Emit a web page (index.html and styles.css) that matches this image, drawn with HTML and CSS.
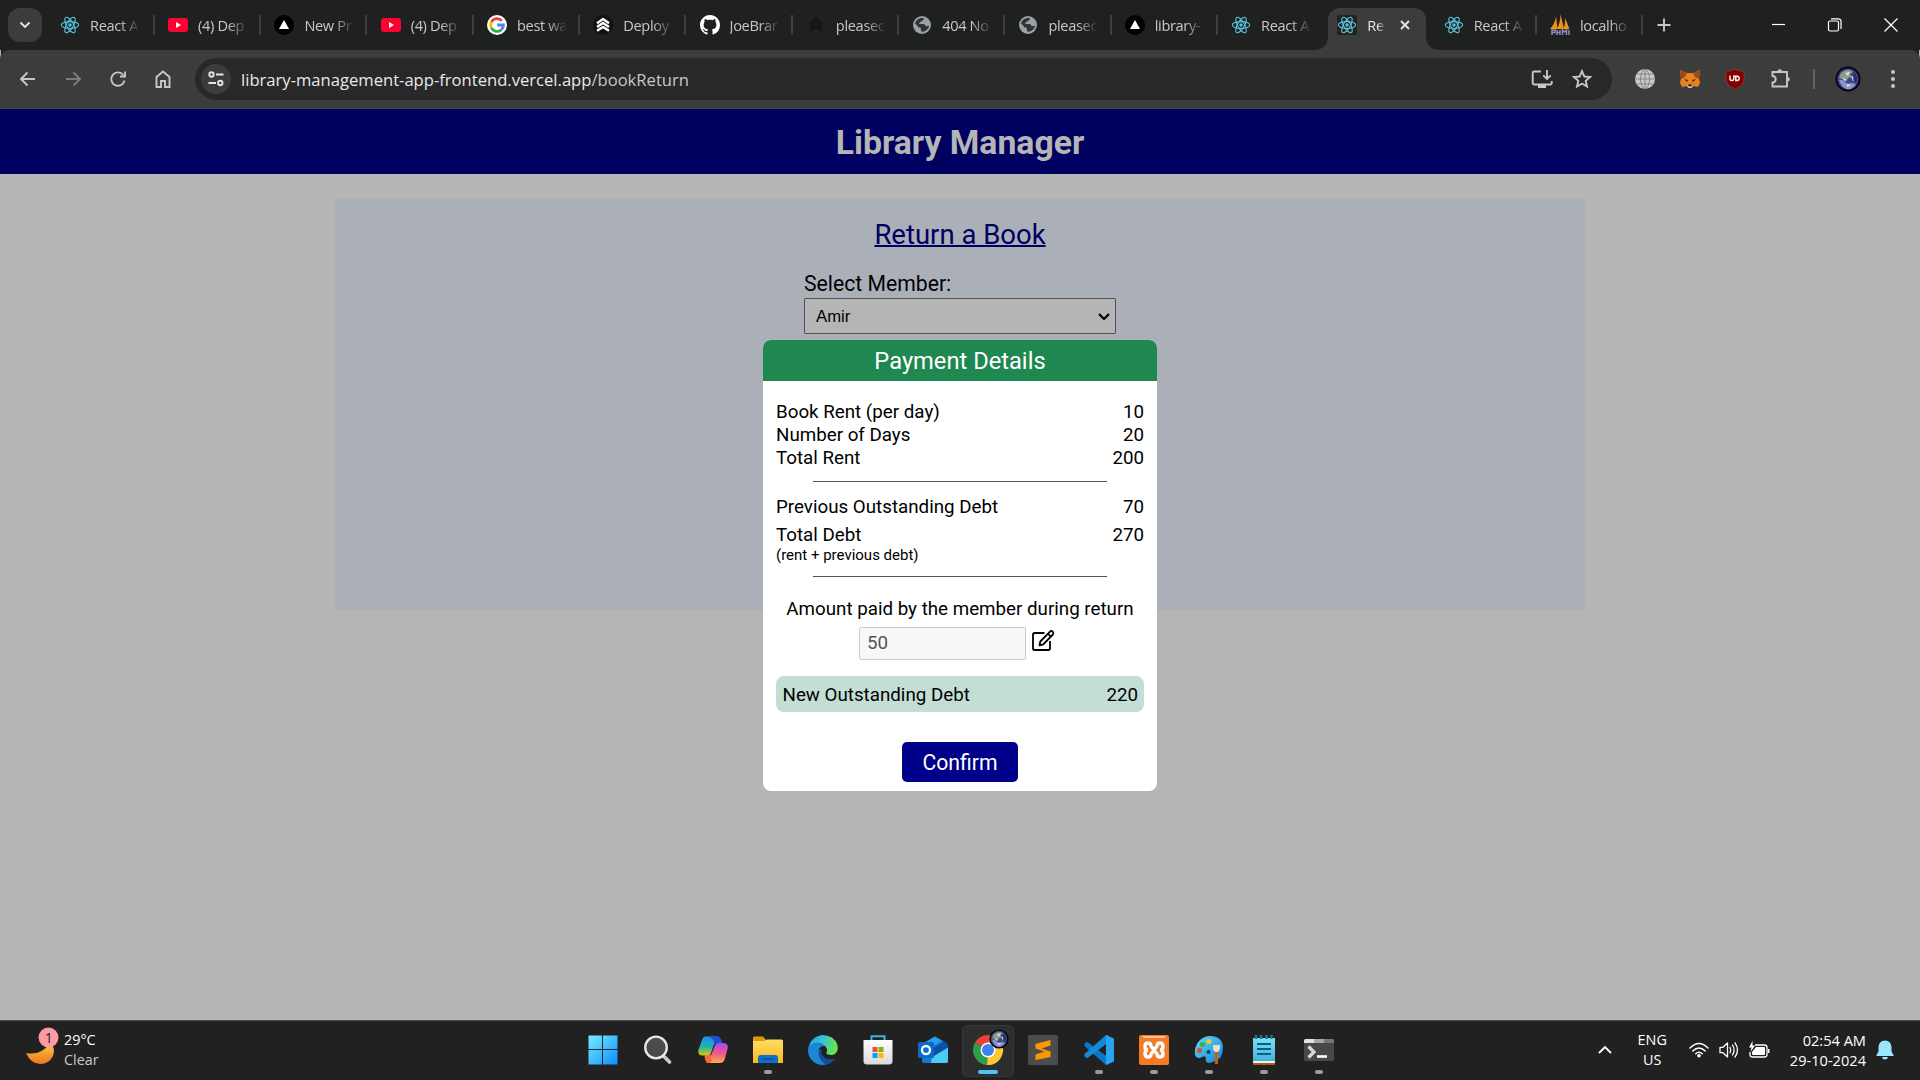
FILE: index.html
```html
<!DOCTYPE html>
<html lang="en">
<head>
<meta charset="utf-8">
<title>Library Manager</title>
<link rel="stylesheet" href="styles.css">
</head>
<body>
<svg class="defs" width="0" height="0" aria-hidden="true">
  <defs>
    <symbol id="react" viewBox="0 0 20 20">
      <g fill="none" stroke="#58c4dc" stroke-width="1.1">
        <ellipse cx="10" cy="10" rx="8.7" ry="3.4"/>
        <ellipse cx="10" cy="10" rx="8.7" ry="3.4" transform="rotate(60 10 10)"/>
        <ellipse cx="10" cy="10" rx="8.7" ry="3.4" transform="rotate(120 10 10)"/>
      </g>
      <circle cx="10" cy="10" r="1.7" fill="#58c4dc"/>
    </symbol>
    <symbol id="youtube" viewBox="0 0 20 20">
      <rect y="3" width="20" height="14" rx="3" fill="#ff0033"/>
      <path d="M8 7v6l5-3z" fill="#fff"/>
    </symbol>
    <symbol id="vercel" viewBox="0 0 20 20">
      <circle cx="10" cy="10" r="10" fill="#000"/>
      <path d="M10 5l5 9H5z" fill="#fff"/>
    </symbol>
    <symbol id="google" viewBox="0 0 20 20">
      <circle cx="10" cy="10" r="10" fill="#fff"/>
      <g fill="none" stroke-width="2.8">
        <path d="M14.8 5.8A6.4 6.4 0 0 0 4.4 7" stroke="#ea4335"/>
        <path d="M4.4 7a6.4 6.4 0 0 0 0 6" stroke="#fbbc05"/>
        <path d="M4.4 13a6.4 6.4 0 0 0 9.8 1.9" stroke="#34a853"/>
        <path d="M14.2 14.9A6.3 6.3 0 0 0 16.4 10H10.2" stroke="#4285f4"/>
      </g>
    </symbol>
    <symbol id="layers" viewBox="0 0 20 20">
      <g fill="none" stroke="currentColor" stroke-width="2.4" stroke-linejoin="round">
        <path d="M4 8.2L10 4l6 4.2"/><path d="M4 12L10 8l6 4"/><path d="M4 15.8L10 12l6 3.8"/>
      </g>
    </symbol>
    <symbol id="github" viewBox="0 0 16 16">
      <path fill="#fff" d="M8 0C3.58 0 0 3.58 0 8c0 3.54 2.29 6.53 5.47 7.59.4.07.55-.17.55-.38 0-.19-.01-.82-.01-1.49-2.01.37-2.53-.49-2.69-.94-.09-.23-.48-.94-.82-1.13-.28-.15-.68-.52-.01-.53.63-.01 1.08.58 1.23.82.72 1.21 1.87.87 2.33.66.07-.52.28-.87.51-1.07-1.78-.2-3.64-.89-3.64-3.95 0-.87.31-1.59.82-2.15-.08-.2-.36-1.02.08-2.12 0 0 .67-.21 2.2.82.64-.18 1.32-.27 2-.27s1.36.09 2 .27c1.53-1.04 2.2-.82 2.2-.82.44 1.1.16 1.92.08 2.12.51.56.82 1.27.82 2.15 0 3.07-1.87 3.75-3.65 3.95.29.25.54.73.54 1.48 0 1.07-.01 1.93-.01 2.2 0 .21.15.46.55.38A8.01 8.01 0 0 0 16 8c0-4.42-3.58-8-8-8z"/>
    </symbol>
    <symbol id="globe" viewBox="0 0 20 20">
      <circle cx="10" cy="10" r="9" fill="#9aa0a6"/>
      <path d="M3 8.5C4 5 7 3 11 2.800c1.500.8.8 2.500-.8 2.900-1.700.3-1.200 1.800-2.700 2-1 .2-.3 1.300.8 1.300h3.200c1.500.2 1.500 1.800 2.700 2.100 1 .3 2.200-.3 3-.6-.6 3.500-3.500 6-6.700 6.300-1-.3-1.800-1-1.600-2.100.2-1.300-.1-2-1.500-2.100-1.500-.1-1.500-1.600-2.500-2.400z" fill="#1f2020" opacity=".85"/>
    </symbol>
    <symbol id="earth" viewBox="0 0 26 26">
      <circle cx="13" cy="13" r="12.500" fill="#05060c"/>
      <circle cx="13" cy="13" r="10.600" fill="#3c4a8c"/>
      <path d="M6 7q5-4 9-3l3 2-3 2 2 3-4 1-2 4-3-3-4-1z" fill="#8b9b86"/>
      <path d="M4 14q4-1 6 2t6 1l5 1q-3 5-8 5.500-6-1-9-9.500z" fill="#8b96c8"/>
      <path d="M10 7l5-1-2 4zM16 10l5 2-3 3zM7 12l4 1-1 2zM12 18l4 1-4 2z" fill="#dfe3ea"/>
      <path d="M18 5q6 5 3 12l-3-4 1-3z" fill="#252f68"/>
    </symbol>
    <linearGradient id="gWin" x1="0" y1="0" x2="1" y2="1"><stop stop-color="#79eeff"/><stop offset="1" stop-color="#0a8dfc"/></linearGradient>
    <linearGradient id="gMoon" x1="0" y1="0" x2="0" y2="1"><stop stop-color="#f9c846"/><stop offset="1" stop-color="#f0761a"/></linearGradient>
    <linearGradient id="gCopA" x1="0" y1="0" x2="0" y2="1"><stop stop-color="#1e8ff0"/><stop offset=".5" stop-color="#1eb0b8"/><stop offset=".75" stop-color="#7cc04a"/><stop offset="1" stop-color="#f3c81b"/></linearGradient>
    <linearGradient id="gCopB" x1="0" y1="0" x2="0" y2="1"><stop stop-color="#a24df0"/><stop offset=".5" stop-color="#f0548c"/><stop offset="1" stop-color="#ffac4a"/></linearGradient>
    <linearGradient id="gFold" x1="0" y1="0" x2="0" y2="1"><stop stop-color="#ffdd63"/><stop offset="1" stop-color="#f9b91c"/></linearGradient>
    <linearGradient id="gEdge" x1="0" y1="0" x2="1" y2=".3"><stop stop-color="#1f9be8"/><stop offset=".5" stop-color="#35c3d8"/><stop offset="1" stop-color="#66e34f"/></linearGradient>
    <linearGradient id="gStore" x1="0" y1="0" x2="0" y2="1"><stop stop-color="#fff"/><stop offset="1" stop-color="#d9d9d9"/></linearGradient>
    <linearGradient id="gPal" x1="0" y1="0" x2="1" y2="1"><stop stop-color="#5be0fa"/><stop offset="1" stop-color="#1380d8"/></linearGradient>
    <linearGradient id="gNote" x1="0" y1="0" x2="0" y2="1"><stop stop-color="#7fe0f2"/><stop offset="1" stop-color="#40b4d6"/></linearGradient>
  </defs>
</svg>

<header class="tabstrip">
  <button class="tab-search"><svg width="12" height="8" viewBox="0 0 12 8"><path d="M1.500 1.500L6 6l4.500-4.500" class="ln"/></svg></button>
  <nav class="tabs">
    <div class="tab"><svg class="fav"><use href="#react"/></svg><span>React A</span></div>
    <div class="tab"><svg class="fav"><use href="#youtube"/></svg><span>(4) Dep</span></div>
    <div class="tab"><svg class="fav"><use href="#vercel"/></svg><span>New Pr</span></div>
    <div class="tab"><svg class="fav"><use href="#youtube"/></svg><span>(4) Dep</span></div>
    <div class="tab"><svg class="fav"><use href="#google"/></svg><span>best wa</span></div>
    <div class="tab"><svg class="fav fav-dark"><use href="#layers"/></svg><span>Deploy</span></div>
    <div class="tab"><svg class="fav"><use href="#github"/></svg><span>JoeBrar</span></div>
    <div class="tab"><svg class="fav fav-dim"><use href="#layers"/></svg><span>pleasec</span></div>
    <div class="tab"><svg class="fav"><use href="#globe"/></svg><span>404 No</span></div>
    <div class="tab"><svg class="fav"><use href="#globe"/></svg><span>pleasec</span></div>
    <div class="tab"><svg class="fav"><use href="#vercel"/></svg><span>library-</span></div>
    <div class="tab no-sep"><svg class="fav"><use href="#react"/></svg><span>React A</span></div>
    <div class="tab active"><svg class="fav fav-box"><use href="#react"/></svg><span>Re</span><svg class="close" width="10" height="10" viewBox="0 0 10 10"><path d="M1 1l8 8M9 1L1 9" class="ln"/></svg></div>
    <div class="tab"><svg class="fav"><use href="#react"/></svg><span>React A</span></div>
    <div class="tab"><svg class="fav" viewBox="0 0 20 20"><path d="M0 14Q5 9 6 1l1.500 13zM7 14Q10.500 7 10.500-1L14 14zM13.500 14q2-5 1.500-11l4.500 11z" fill="#f29111"/><path d="M2 20v-5h3v2.500H2M7 20v-5M10 20v-5M7 17.500h3M12.500 20v-5l2 2 2-2v5M19 20v-5" fill="none" stroke="#8a8cc0" stroke-width="1.500"/></svg><span>localho</span></div>
  </nav>
  <button class="new-tab"><svg width="14" height="14" viewBox="0 0 14 14"><path d="M7 .5v13M.5 7h13" class="ln"/></svg></button>
  <div class="window-controls">
    <svg width="14" height="14" viewBox="0 0 14 14"><path d="M0 6.500h13" class="thin"/></svg>
    <svg width="14" height="14" viewBox="0 0 14 14"><rect x=".5" y="3" width="10" height="10" rx="1.500" class="thin"/><path d="M3 .800h7.500a2.500 2.500 0 0 1 2.500 2.500V11" class="thin"/></svg>
    <svg width="14" height="14" viewBox="0 0 14 14"><path d="M.5.5l13 13M13.500.5l-13 13" class="thin"/></svg>
  </div>
</header>

<section class="toolbar">
  <div class="nav-buttons">
    <svg width="20" height="20" viewBox="0 0 20 20"><path d="M17 10H3.500M9.500 3.500L3 10l6.500 6.500" class="ln"/></svg>
    <svg class="off" width="20" height="20" viewBox="0 0 20 20"><path d="M3 10h13.500M10.500 3.500L17 10l-6.500 6.500" class="ln"/></svg>
    <svg width="20" height="20" viewBox="0 0 20 20"><path d="M16.500 11.500A6.700 6.700 0 1 1 15.300 6M17 2.500V7.500h-5" class="ln"/></svg>
    <svg width="20" height="20" viewBox="0 0 20 20"><path d="M3.500 8L10 2.500 16.500 8v10H12v-6H8v6H3.500z" class="ln"/></svg>
  </div>
  <div class="omnibox">
    <span class="site-chip"><svg width="18" height="18" viewBox="0 0 18 18"><g class="ln"><circle cx="4.500" cy="4.500" r="2.200"/><path d="M9 4.500h7.500M1.500 13H9"/><circle cx="13.300" cy="13" r="2.200"/></g></svg></span>
    <span class="url">library-management-app-frontend.vercel.app<em>/bookReturn</em></span>
    <svg class="install" width="22" height="20" viewBox="0 0 22 20"><path d="M10 2.500H3.200a1.500 1.500 0 0 0-1.500 1.500V14a1.500 1.500 0 0 0 1.500 1.500h16A1.500 1.500 0 0 0 20.700 14v-2M16 1v8.500M12.300 6.300L16 10l3.700-3.700" class="ln"/><path d="M7 16h8v3H7z" fill="#c7c7c7"/></svg>
    <svg width="20" height="20" viewBox="0 0 20 20"><path d="M10 2.200l2.300 5.300 5.800.5-4.400 3.800 1.300 5.700-5-3-5 3 1.300-5.700L1.900 8l5.800-.5z" class="ln"/></svg>
  </div>
  <div class="extensions">
    <svg width="20" height="20" viewBox="0 0 20 20"><circle cx="10" cy="10" r="10" fill="#c9c9c9"/><g fill="none" stroke="#858585"><ellipse cx="10" cy="10" rx="4.500" ry="9.500"/><path d="M10 0v20M.5 10h19M2 5h16M2 15h16"/></g></svg>
    <svg width="20" height="20" viewBox="0 0 20 20"><path d="M0 1l7 3h6l7-3-1 8 1 5-2 4-5-1-1.500 2h-3L7 17l-5 1-2-4 1-5z" fill="#e8821e"/><path d="M0 1l7 3-2 4-4 2zM20 1l-7 3 2 4 4 2z" fill="#9c4a1c"/><path d="M4 10l4 1-1 2zM16 10l-4 1 1 2z" fill="#3b2b25"/><path d="M7 17l1.500-1.500h3L13 17l-1.500 2h-3z" fill="#d5c8bc"/><path d="M8.300 15.300h3.400v2H8.300z" fill="#222"/></svg>
    <svg width="20" height="20" viewBox="0 0 20 20"><path d="M10 0q4 2.500 9 2.500V10q0 6.500-9 10-9-3.500-9-10V2.500Q6 2.500 10 0z" fill="#800000" stroke="#a54a4a" stroke-width=".5"/><path d="M5 6.500v3.300q0 1.700 1.900 1.700t1.900-1.700V6.500M8.800 7.200h3.700a2.200 2.200 0 0 1 0 4.300h-1.700V7.200" fill="none" stroke="#fff" stroke-width="1.400"/></svg>
    <svg width="22" height="22" viewBox="0 0 22 22"><path d="M2.500 4h14.500v14.500H2.500v-4q3.200 0 3.200-3.200T2.500 8z" class="ln"/><path d="M7.500 3.500a2.300 2.300 0 0 1 4.600 0zM17.500 9a2.300 2.300 0 0 1 0 4.600z" fill="#c7c7c7"/></svg>
    <i class="divider"></i>
    <svg class="avatar" width="26" height="26"><use href="#earth"/></svg>
    <svg width="20" height="20" viewBox="0 0 20 20" fill="#c7c7c7"><circle cx="10" cy="3" r="2"/><circle cx="10" cy="10" r="2"/><circle cx="10" cy="17" r="2"/></svg>
  </div>
</section>

<main class="page">
  <header class="brand">Library Manager</header>
  <section class="panel">
    <h2>Return a Book</h2>
    <div class="member">
      <label for="member">Select Member:</label>
      <select id="member"><option>Amir</option></select>
      <svg class="caret" width="12" height="8" viewBox="0 0 12 8"><path d="M1 1l5 5 5-5" fill="none" stroke="#000" stroke-width="2.200"/></svg>
    </div>
  </section>

  <div class="modal">
    <header class="modal-title">Payment Details</header>
    <div class="modal-body">
      <div class="row"><span>Book Rent (per day)</span><span>10</span></div>
      <div class="row"><span>Number of Days</span><span>20</span></div>
      <div class="row"><span>Total Rent</span><span>200</span></div>
      <hr>
      <div class="row"><span>Previous Outstanding Debt</span><span>70</span></div>
      <div class="row total"><span>Total Debt</span><span>270</span></div>
      <div class="note">(rent + previous debt)</div>
      <hr>
      <div class="paid-label">Amount paid by the member during return</div>
      <div class="paid">
        <input value="50" disabled>
        <svg width="24" height="23" viewBox="0 0 24 23"><g fill="none" stroke="#000" stroke-width="1.800" stroke-linejoin="round"><path d="M13.500 4H3.700A1.700 1.700 0 0 0 2 5.700v13.600A1.700 1.700 0 0 0 3.700 21h13.600a1.700 1.700 0 0 0 1.700-1.700V12"/><path d="M8.500 16.300l.8-3.800L19 2.600q1.400-1.200 2.700 0t.2 2.900L12.300 15.400z"/><path d="M17 4.800l2.800 2.900"/></g></svg>
      </div>
      <div class="row new-debt"><span>New Outstanding Debt</span><span>220</span></div>
      <button class="confirm">Confirm</button>
    </div>
  </div>
</main>

<footer class="taskbar">
  <div class="weather">
    <svg width="34" height="38" viewBox="0 0 34 38"><path d="M0 26q15 3 24-10 6 5 3 13-4 8-13 8-9 0-14-11z" fill="url(#gMoon)"/><circle cx="22.500" cy="10.500" r="10" fill="#ff99a4"/><text x="22.800" y="15.800" text-anchor="middle" class="badge">1</text></svg>
    <div><b>29°C</b><span>Clear</span></div>
  </div>
  <div class="apps">
    <div class="app"><svg viewBox="0 0 30 30"><path d="M.5.5H14V14H.5zM15 .5h14.500V14H15zM.5 15H14v14.500H.5zM15 15h14.500v14.500H15z" fill="url(#gWin)"/></svg></div>
    <div class="app"><svg viewBox="0 0 30 30"><path d="M19 19.500l7.500 7.500" stroke="#c9cbd0" stroke-width="3.600" stroke-linecap="round"/><circle cx="13" cy="12.500" r="10.800" fill="#4b4b4b" stroke="#e8e9ec" stroke-width="2.300"/></svg></div>
    <div class="app"><svg viewBox="0 0 30 30"><path d="M7 1.500h12q3 0 4 3.500l1 3h-5q-3 0-4 4l-2 6-2 3q-1 0-3-.500H5q-6 0-4.500-6L4 5q1-3.500 3-3.500z" fill="url(#gCopA)"/><path d="M15 1.500h4q3 0 4 3.500l1 3h-5l-2.500 2q0-6-5.500-8.500z" fill="#1b50d8"/><path d="M24.500 8h1.500q5 1 3.500 6L27 23.500q-1.500 4.500-5 4.500H10q-2 0-3-5l-.5-2.500h5q2 0 3-4l2-5q1.500-3.500 4-3.500z" fill="url(#gCopB)"/><path d="M6.500 20.500h5L14 26l-2 2h-2q-2 0-3-5z" fill="#f56a38"/></svg></div>
    <div class="app"><svg viewBox="0 0 30 30"><path d="M0 3q0-1.500 1.500-1.500H10L13 5v5H0z" fill="#dc9a08"/><path d="M0 6h11l3-1.500h14.500Q30 4.500 30 6v22H0z" fill="url(#gFold)"/><path d="M5 28v-5q0-3 3-3h14q3 0 3 3v5z" fill="#0f6fc4"/><path d="M8.500 24h13" stroke="#0a4b92" stroke-width="1.300"/></svg><i></i></div>
    <div class="app"><svg viewBox="0 0 30 30"><path d="M0 15A15 15 0 0 0 24 27q-6 1-9-3-4-5-1-9z" fill="#1766b8"/><path d="M10.500 16.500q-1 12 9 12.800 5-1.300 8-6.300-5 2.500-10 0t-4-8z" fill="#104f96"/><path d="M0 15Q2 2 14 0q12 0 15.500 10 1.500 8-5 10-5 .5-6.500-2 2.500-3-.5-6.500Q12 5.500 4.500 9.500 1 12 0 15z" fill="url(#gEdge)"/><path d="M0 15q1-7 9-7.500 6 0 8.500 4-5-2-7 4-1 8 6.500 13.700-5 1.500-10-1.500Q0 23 0 15z" fill="#1b86d3"/></svg></div>
    <div class="app"><svg viewBox="0 0 30 30"><path d="M8.500 6V1.300h13V6" fill="none" stroke="#35b8f0" stroke-width="2"/><path d="M.5 5h29v21q0 3.500-3.500 3.500H4Q.5 29.500.5 26z" fill="url(#gStore)"/><path d="M9.500 12h5v5h-5z" fill="#f25022"/><path d="M15.500 12h5v5h-5z" fill="#7fba00"/><path d="M9.500 18h5v5h-5z" fill="#00a4ef"/><path d="M15.500 18h5v5h-5z" fill="#ffb900"/></svg></div>
    <div class="app"><svg viewBox="0 0 30 30"><path d="M4 9L17 1.500 30 9v17q0 2-2 2H6q-2 0-2-2z" fill="#1679cf"/><path d="M4 9L17 1.500 24 5.500 8 16z" fill="#2a9be8"/><path d="M15 17L30 9v17q0 2-2 2H13z" fill="#48cdf5"/><path d="M30 9v3.500L16 21l-4-6 14-8.500z" fill="#0a4fa8"/><rect y="7" width="16" height="16" rx="1.500" fill="#0b6bcb"/><circle cx="8" cy="15" r="4" fill="none" stroke="#fff" stroke-width="2.300"/></svg></div>
    <div class="app current"><svg viewBox="0 0 30 30"><path d="M15 15L2 7.500A15 15 0 0 1 28 7.500z" fill="#ea4335"/><path d="M15 15l-1 15A15 15 0 0 1 2 7.500z" fill="#2f9e4b"/><path d="M15 15l0-7.500h13A15 15 0 0 1 14 30z" fill="#fcc934"/><circle cx="15" cy="15" r="7.500" fill="#fff"/><circle cx="15" cy="15" r="6" fill="#3d82f0"/></svg><svg class="profile" viewBox="0 0 26 26"><use href="#earth" width="26" height="26"/></svg><i></i></div>
    <div class="app"><svg viewBox="0 0 30 30"><rect width="30" height="30" rx="1.500" fill="#4c4c4c"/><path d="M22.500 5v5.500l-9 3 9 3v5.500L7.500 25v-5.500l9-3-9-3V9z" fill="#ff9800"/></svg></div>
    <div class="app"><svg viewBox="0 0 30 30"><path d="M1.500 7.500L3.500 7 25 23v6l-3 1L.5 11V9z" fill="#0a78c8"/><path d="M1.500 22.500l2 .5L25 7V1l-3-1L.5 19v2z" fill="#1389d8"/><path d="M22 0l8 3.500v23L22 30z" fill="#29a4ee"/></svg><i></i></div>
    <div class="app"><svg viewBox="0 0 30 30"><rect width="30" height="30" rx="2" fill="#f47b25"/><path d="M3 1h24l-2 2H5z" fill="#ffc193"/><path d="M12 11q0-3-3-3t-3 3.500T9 15q-3 0-3 3.500T9 22t3-3l1.500-2q1.500-1.500 3 0L18 19q0 3 3 3t3-3.500-3-3.500q3 0 3-3.500T21 8t-3 3l-1.500 2q-1.500 1.500-3 0z" fill="none" stroke="#fff" stroke-width="3.400"/></svg><i></i></div>
    <div class="app"><svg viewBox="0 0 30 30"><path d="M16 1Q28 1 29 12q0 12-8 14-4 2-7 2-3-1-2-5-1-3-4-1-5 3-7-2Q0 12 5 6q5-5 11-5z" fill="url(#gPal)"/><circle cx="15" cy="6.500" r="2.600" fill="#f7c325"/><circle cx="8.500" cy="9.500" r="2.600" fill="#3fae3a"/><circle cx="5.500" cy="15.500" r="2.600" fill="#d9532b"/><circle cx="14.500" cy="17" r="2" fill="#123d6a"/><path d="M20.500 15h3.500v14h-3z" fill="#b8651b"/><path d="M19 10h7v4l-2 3h-3l-2-3z" fill="#eadfcb"/></svg><i></i></div>
    <div class="app"><svg viewBox="0 0 30 30"><path d="M4 27h22v3H4z" fill="#b5561b"/><path d="M4 25.500h22v2.500H4z" fill="#f3eee6"/><path d="M4 3h22v23H4z" fill="url(#gNote)"/><path d="M8 9h14M8 14h14M8 19h14" stroke="#0b5d86" stroke-width="1.800"/><path d="M7 0v4M12 0v4M17.500 0v4M22.500 0v4" stroke="#14799c" stroke-width="2.400"/></svg><i></i></div>
    <div class="app"><svg viewBox="0 0 30 30"><rect y="4" width="30" height="22" rx="1.500" fill="#484848"/><path d="M0 8V5.500Q0 4 1.500 4H10v4z" fill="#e2e2e2"/><path d="M10 4h10v4H10z" fill="#a8a8a8"/><path d="M20 4h8.500Q30 4 30 5.500V8H20z" fill="#777"/><path d="M4.500 11.500l5.500 5.500-5.500 5.500" fill="none" stroke="#d8d8d8" stroke-width="3.200"/><path d="M13 21.500h10" stroke="#fff" stroke-width="2.600"/></svg><i></i></div>
  </div>
  <div class="tray">
    <svg class="chev" width="14" height="9" viewBox="0 0 14 9"><path d="M1 8l6-6 6 6" fill="none" stroke="#fff" stroke-width="1.800"/></svg>
    <div class="lang">ENG<br>US</div>
    <svg class="wifi" width="20" height="16" viewBox="0 0 20 16"><g fill="none" stroke="#fff" stroke-width="1.500" stroke-linecap="round"><path d="M1 6q9-9 18 0M3.800 9q6.200-6 12.400 0M6.700 11.700q3.300-3 6.600 0"/></g><circle cx="10" cy="13.800" r="1.800" fill="#fff"/></svg>
    <svg class="vol" width="20" height="18" viewBox="0 0 20 18"><g fill="none" stroke="#fff" stroke-width="1.300" stroke-linecap="round"><path d="M1 6.300h3L8.500 2v14L4 11.700H1z" stroke-linejoin="round"/><path d="M11 6.300q1.500 2.700 0 5.400M13.500 4q3.200 5 0 10M16 1.800q5 7.200 0 14.400"/></g></svg>
    <svg class="bat" width="22" height="18" viewBox="0 0 22 18"><path d="M7 4h9.500A2.500 2.500 0 0 1 19 6.500v7a2.500 2.500 0 0 1-2.500 2.500h-12A2.500 2.500 0 0 1 2 13.500V11" fill="none" stroke="#fff" stroke-width="1.300"/><path d="M8 6h8q1 0 1 1v6q0 1-1 1H5q-1 0-1-1v-2zM20 8h1.500v4H20z" fill="#fff"/><path d="M4.500 0L1 6.500h2.500L2.500 11 7 4.500H4.500z" fill="#fff"/></svg>
    <div class="clock">02:54 AM<br>29-10-2024</div>
    <svg width="18" height="20" viewBox="0 0 18 20"><path d="M9 .5q6 0 6.500 6.500v4.500L17.500 15v1H.5v-1l2-3.500V7Q3 .5 9 .5zM6 17h6q-.5 2.500-3 2.500T6 17z" fill="#9ae6ff"/></svg>
  </div>
</footer>
</body>
</html>
```
FILE: styles.css
```css
* { box-sizing: border-box; }

html, body { height: 100%; margin: 0; overflow: hidden; }

body {
  display: flex;
  flex-direction: column;
  background: #b5b5b5;
  font-family: Roboto, sans-serif;
  color: #000;
}

svg { display: block; flex: none; overflow: visible; }
.defs { position: absolute; }
.ln { fill: none; stroke: currentColor; stroke-width: 1.9; }
.thin { fill: none; stroke: #fff; stroke-width: 1.2; }
button { border: 0; padding: 0; font: inherit; color: inherit; }

/* Browser tab strip */
.tabstrip {
  flex: none;
  display: flex;
  height: 50px;
  background: #1f2120;
  color: #c7c7c7;
  font: 14.6px "Open Sans", sans-serif;
}
.tab-search {
  display: grid;
  place-items: center;
  width: 34px;
  height: 34px;
  margin: 8px 6.600px 0 8px;
  border-radius: 12px;
  background: #3c3c3c;
  color: #e4e4e4;
}
.tabs { display: flex; }
.tab {
  position: relative;
  display: flex;
  align-items: center;
  width: 106.300px;
  height: 50px;
  padding-left: 13.200px;
}
.tab:first-child { padding-left: 11.500px; }
.tab::after {
  content: "";
  position: absolute;
  right: 0;
  top: 15px;
  width: 2px;
  height: 20px;
  background: #3e3f3f;
}
.tab.active::after, .tab.no-sep::after { display: none; }
.fav { width: 20px; height: 20px; margin-right: 10px; }
.fav-dark { border-radius: 50%; background: #111; color: #fff; }
.fav-dim { color: #131414; }
.fav-box { background: #222; border-radius: 2px; }
.tab span {
  width: 54px;
  white-space: nowrap;
  letter-spacing: -.35px;
  -webkit-mask: linear-gradient(90deg, #000 55%, transparent 94%);
  mask: linear-gradient(90deg, #000 55%, transparent 94%);
}
.tab.active { color: #e4e4e4; z-index: 0; }
.tab.active::before {
  content: "";
  position: absolute;
  z-index: -1;
  left: 3.500px;
  right: 4px;
  top: 7.500px;
  bottom: 0;
  border-radius: 12px 12px 0 0;
  background: #3c3c3c;
}
.tab.active span { width: 20px; margin-right: 13px; }
.no-sep::before, .active + .tab::before {
  content: "";
  position: absolute;
  bottom: 0;
  width: 12px;
  height: 12px;
}
.no-sep::before { right: -3.500px; background: radial-gradient(circle at 0 0, transparent 11.500px, #3c3c3c 12px); }
.active + .tab::before { left: -4px; background: radial-gradient(circle at 100% 0, transparent 11.500px, #3c3c3c 12px); }
.new-tab { background: none; margin: 0 0 0 13.500px; }
.window-controls { display: flex; align-items: center; gap: 42px; margin-left: auto; padding-right: 22px; }

/* Browser toolbar */
.toolbar {
  flex: none;
  display: flex;
  align-items: center;
  height: 59px;
  border-bottom: 1px solid #474747;
  border-radius: 9px 9px 0 0;
  background: #3c3c3c;
  box-shadow: 0 -10px 0 -1px #1f2120;
  color: #c7c7c7;
}
.tabstrip { position: relative; z-index: 1; }
.nav-buttons { flex: none; display: flex; gap: 25px; padding-left: 17.500px; width: 195px; }
.off { color: #7c7c7c; }
.omnibox {
  flex: none;
  display: flex;
  align-items: center;
  width: 1417px;
  height: 42px;
  padding: 0 20px 0 6px;
  border-radius: 21px;
  background: #282828;
}
.site-chip {
  display: grid;
  place-items: center;
  width: 30px;
  height: 30px;
  margin-right: 10px;
  border-radius: 50%;
  background: #3c3c3c;
  color: #e4e4e4;
}
.url { flex: 1; font: 16.600px "Open Sans", sans-serif; color: #e8e8e8; }
.url em { font-style: normal; color: #c7c7c7; }
.install { margin-right: 19px; }
.extensions { flex: none; display: flex; align-items: center; padding-left: 23px; }
.extensions svg { margin-right: 25px; }
.extensions svg:last-child { margin-right: 0; }
.extensions .divider { width: 2px; height: 20px; margin: 0 20px 0 -4px; background: #636363; }
.extensions .avatar { margin-right: 22px; }

/* Library app, dimmed behind the dialog */
.page { position: relative; flex: 1; display: flex; flex-direction: column; align-items: center; }
.brand {
  align-self: stretch;
  height: 65px;
  background: #000061;
  color: #b5b5b5;
  font-size: 33.750px;
  font-weight: 700;
  line-height: 67px;
  text-align: center;
}
.panel {
  width: 1250px;
  height: 411px;
  margin-top: 25px;
  padding-top: 18px;
  background: #abb0b8;
}
.panel h2 {
  margin: 0 0 18px;
  color: #000061;
  font-size: 27.500px;
  font-weight: 400;
  line-height: 36px;
  text-align: center;
  text-decoration: underline;
  text-decoration-thickness: 2px;
}
.member { position: relative; display: flex; flex-direction: column; width: 312px; margin: 0 auto; }
.member label { font-size: 21.200px; line-height: 25px; padding-bottom: 2px; }
.member select {
  height: 36px;
  padding: 0 0 0 11px;
  border: 1px solid #545454;
  border-radius: 1px;
  appearance: none;
  background: #b5b5b5;
  color: #000;
  font: 16.700px "Liberation Sans", sans-serif;
}
.caret { position: absolute; right: 6px; bottom: 13px; }

/* Payment dialog */
.modal {
  position: absolute;
  top: 231px;
  left: 50%;
  width: 394px;
  height: 451px;
  transform: translateX(-50%);
  border-radius: 8px;
  overflow: hidden;
  background: #fff;
  font-size: 18.750px;
}
.modal-title {
  height: 41px;
  background: #1f8850;
  color: #fff;
  font-size: 23.700px;
  line-height: 42px;
  text-align: center;
}
.modal-body { display: flex; flex-direction: column; padding: 20px 13px 9px; line-height: 23px; }
.row { display: flex; justify-content: space-between; }
.modal hr { width: 80%; height: 1px; margin: 11px auto 14px; border: 0; background: #545454; }
.total { margin-top: 5px; }
.note { font-size: 15px; line-height: 18px; margin-top: -1px; }
.note + hr { margin-top: 12px; }
.paid-label { margin-top: 7px; text-align: center; }
.paid { display: flex; gap: 5px; margin: 6px 0 16px 83px; }
.paid input {
  width: 167px;
  height: 33px;
  padding: 0 0 1px 7px;
  border: 1px solid #cbcbcb;
  border-radius: 2px;
  background: #f8f8f8;
  color: #545454;
  font: 18.750px Roboto, sans-serif;
}
.paid svg { margin-top: 2px; }
.new-debt { height: 36px; padding: 0 6px 0 6.500px; border-radius: 8px; background: #c3dfd5; line-height: 38px; }
.confirm {
  align-self: center;
  width: 116px;
  height: 40px;
  margin-top: 30px;
  border-radius: 5px;
  background: #00008b;
  color: #fff;
  font-size: 21.200px;
}

/* Windows taskbar */
.taskbar {
  flex: none;
  display: grid;
  grid-template-columns: 575.200px 772px 1fr;
  height: 60px;
  border-top: 1px solid #4a4a4a;
  background: #212121;
  color: #fff;
  font: 14.400px/20px "Open Sans", sans-serif;
}
.weather { display: flex; gap: 4px; padding: 6px 0 0 26px; }
.weather div { display: flex; flex-direction: column; padding-top: 3px; }
.weather b { font-weight: 400; }
.weather span { color: #c8c8c8; }
.badge { font-size: 14px; fill: #222; }
.apps { display: flex; }
.app { position: relative; display: flex; justify-content: center; width: 55.100px; padding-top: 14px; }
.app > svg { position: relative; width: 30px; height: 30px; }
.app i {
  position: absolute;
  bottom: 6px;
  width: 8px;
  height: 4px;
  border-radius: 2px;
  background: #9a9a9a;
}
.current::before {
  content: "";
  position: absolute;
  top: 4px;
  width: 50px;
  height: 50px;
  border: 1px solid #383838;
  border-radius: 5px;
  background: #2d2d2d;
}
.current i { width: 20px; background: #4cc2ff; }
.app > .profile { position: absolute; top: 8px; left: 28px; width: 20px; height: 20px; }
.tray { display: flex; justify-content: flex-end; align-items: center; padding: 0 26px 2px 0; }
.chev { margin: 0 26px 0 0; }
.lang { line-height: 20px; padding-top: 1px; text-align: center; margin-right: 22px; }
.wifi { margin-right: 10px; }
.vol { margin-right: 9px; }
.bat { margin-right: 20px; }
.clock { text-align: right; margin-right: 10px; font-size: 14.600px; }
```
